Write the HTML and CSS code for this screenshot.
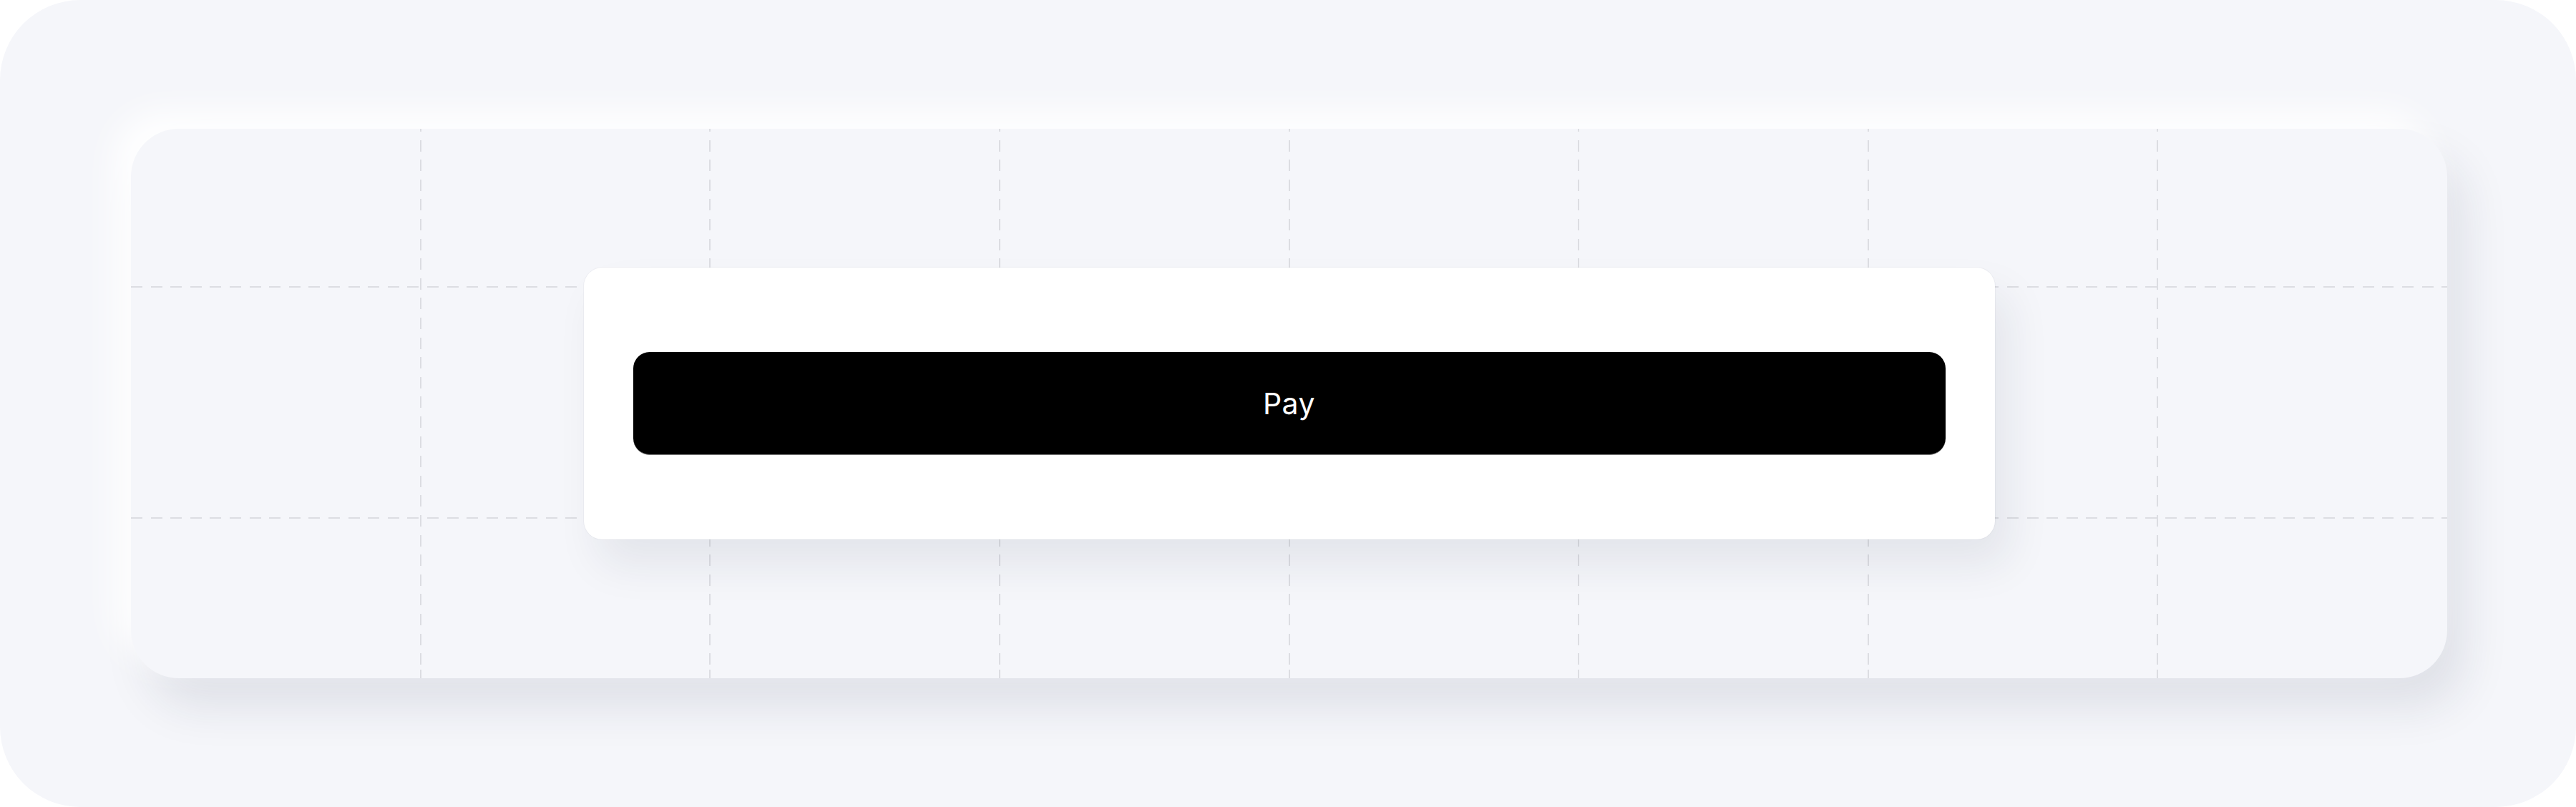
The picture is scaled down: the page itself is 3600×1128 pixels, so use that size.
FILE: index.html
```html
<!DOCTYPE html>
<html lang="en">
<head>
<meta charset="utf-8">
<title>Pay</title>
<link rel="stylesheet" href="styles.css">
</head>
<body>
<div class="frame">
  <div class="canvas">
    <div class="grid-cols" aria-hidden="true">
      <div class="col"></div><div class="col"></div><div class="col"></div><div class="col"></div>
      <div class="col"></div><div class="col"></div><div class="col"></div><div class="col"></div>
    </div>
    <div class="grid-rows" aria-hidden="true">
      <div class="row"></div><div class="row"></div><div class="row"></div>
    </div>
    <div class="panel">
      <button class="pay-btn" type="button">Pay</button>
    </div>
  </div>
</div>
</body>
</html>
```

FILE: styles.css
```css
html, body {
  margin: 0;
  padding: 0;
  background: #ffffff;
}

.frame {
  width: 3600px;
  height: 1128px;
  box-sizing: border-box;
  padding: 180px 180px 180px 183px;
  background: #f5f6fa;
  border-radius: 112px;
  display: flex;
}

.canvas {
  position: relative;
  flex: 1;
  background: #f5f6fa;
  border-radius: 67px;
  box-shadow: -24px -24px 48px rgba(255, 255, 255, 0.95),
              24px 40px 64px rgba(30, 35, 70, 0.10);
  display: flex;
  align-items: center;
  justify-content: center;
  overflow: visible;
}

.grid-cols,
.grid-rows {
  position: absolute;
  inset: 0;
  display: grid;
  pointer-events: none;
}

.grid-cols {
  grid-template-columns: repeat(8, 1fr);
}

.grid-rows {
  grid-template-rows: 221px 323px 1fr;
}

.col {
  position: relative;
}

.col:not(:last-child)::after {
  content: "";
  position: absolute;
  top: 0;
  bottom: 0;
  right: -1px;
  width: 2px;
  background: repeating-linear-gradient(to bottom,
    #dcdde2 0 16px, transparent 16px 27.6px);
  background-position: 0 -12px;
}

.row {
  position: relative;
}

.row:not(:last-child)::after {
  content: "";
  position: absolute;
  left: 0;
  right: 0;
  bottom: -1px;
  height: 2px;
  background: repeating-linear-gradient(to right,
    #dcdde2 0 16px, transparent 16px 27.6px);
}

.panel {
  position: relative;
  z-index: 1;
  width: 1972px;
  height: 380px;
  box-sizing: border-box;
  padding: 118px 69px;
  background: #ffffff;
  border-radius: 26px;
  box-shadow: 0 0 0 1px rgba(20, 25, 50, 0.035),
              20px 36px 60px rgba(30, 35, 70, 0.08);
  display: flex;
}

.pay-btn {
  flex: 1;
  height: 144px;
  border: none;
  border-bottom: 1px solid #7a7a7a;
  border-radius: 23px;
  background: #000000;
  color: #ffffff;
  font-family: Inter, "Liberation Sans", sans-serif;
  font-size: 41px;
  font-weight: 400;
  letter-spacing: 0.5px;
  cursor: pointer;
  padding: 0;
}
```
